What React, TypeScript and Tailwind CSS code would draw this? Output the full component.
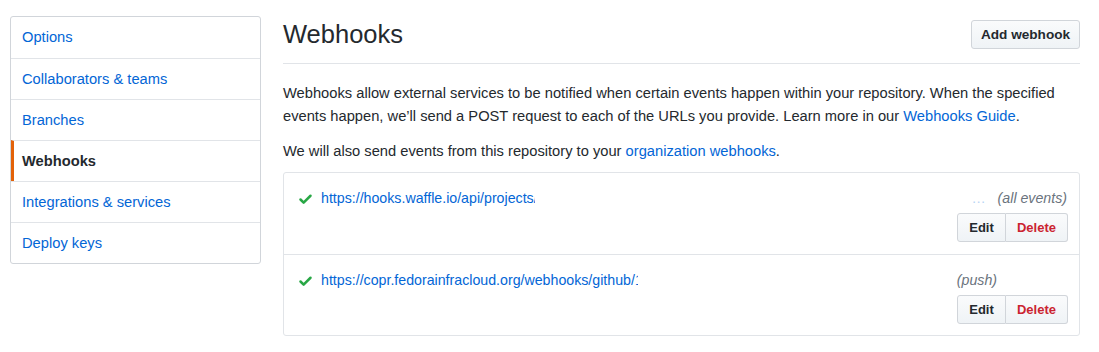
import { Check } from "lucide-react";

const navItems = [
  { title: "Options", active: false },
  { title: "Collaborators & teams", active: false },
  { title: "Branches", active: false },
  { title: "Webhooks", active: true },
  { title: "Integrations & services", active: false },
  { title: "Deploy keys", active: false },
];

const hooks = [
  {
    url: "https://hooks.waffle.io/api/projects/5a1b2c3d4e5f/sources/github",
    clip: "w-[214px]",
    events: "(all events)",
    faded: true,
  },
  {
    url: "https://copr.fedorainfracloud.org/webhooks/github/12345/",
    clip: "w-[317px]",
    events: "(push)",
    faded: false,
  },
];

const btn =
  "h-[29px] font-bold border border-[#d1d5da] bg-gradient-to-b from-[#fafbfc] to-[#eff3f6] leading-none whitespace-nowrap";

export default function App() {
  return (
    <div
      className="flex gap-[22px] pl-[10px] pt-4 pr-[19px] text-[14.7px] text-[#24292e] bg-white min-h-[352px]"
      style={{ fontFamily: '"Liberation Sans", Arial, sans-serif' }}
    >
      {/* sidebar */}
      <nav className="w-[251px] shrink-0 self-start border border-[#d1d5da] rounded-[3px] bg-white">
        {navItems.map((item, i) => (
          <div
            key={item.title}
            className={
              "h-[41px] flex items-center " +
              (i > 0 ? "border-t border-[#e1e4e8] " : "") +
              (item.active
                ? "border-l-[3px] border-l-[#e36209] pl-[8px] font-bold text-[#24292e]"
                : "pl-[11px] text-[#0366d6]")
            }
          >
            {item.title}
          </div>
        ))}
      </nav>

      {/* main */}
      <main className="flex-1">
        <div className="flex items-start justify-between border-b border-[#e1e4e8] h-[48px]">
          <h2 className="text-[25.5px] font-normal leading-none mt-[6px]">Webhooks</h2>
          <button className={btn + " mt-[4px] text-[13.6px] rounded-[3px] w-[109px]"}>Add webhook</button>
        </div>

        <p className="mt-[18px] leading-[23px]">
          Webhooks allow external services to be notified when certain events happen within your
          repository. When the specified events happen, we’ll send a POST request to each of the
          URLs you provide. Learn more in our{" "}
          <a className="text-[#0366d6]">Webhooks Guide</a>.
        </p>
        <p className="mt-[12px] leading-[23px]">
          We will also send events from this repository to your{" "}
          <a className="text-[#0366d6]">organization webhooks</a>.
        </p>

        <div className="mt-[9px] border border-[#e1e4e8] rounded-[3px]">
          {hooks.map((hook, i) => (
            <div
              key={hook.url}
              className={"h-[81px] pl-[14px] pr-[11px] pt-[17px] " + (i > 0 ? "border-t border-[#e1e4e8]" : "")}
            >
              <div className="flex items-center justify-between h-[18px]">
                <div className="flex items-center gap-[8px]">
                  <Check className="w-[15px] h-[15px] text-[#28a745]" strokeWidth={4} />
                  <span className={"text-[14.2px] text-[#0366d6] overflow-hidden whitespace-nowrap " + hook.clip}>
                    {hook.url}
                  </span>
                </div>
                <div className="flex items-center gap-[12px] text-[14.2px] mr-[1px]">
                  {hook.faded && <span className="text-[#b8d4f5]">…</span>}
                  <span className="italic text-[#6a737d]">{hook.events}</span>
                  {!hook.faded && <span className="w-[58px]" />}
                </div>
              </div>
              <div className="flex justify-end mt-[5px]">
                <div className="flex">
                  <button className={btn + " text-[13px] rounded-l-[3px] w-[49px]"}>Edit</button>
                  <button className={btn + " text-[13px] rounded-r-[3px] border-l-0 w-[62px] text-[#cb2431]"}>
                    Delete
                  </button>
                </div>
              </div>
            </div>
          ))}
        </div>
      </main>
    </div>
  );
}
